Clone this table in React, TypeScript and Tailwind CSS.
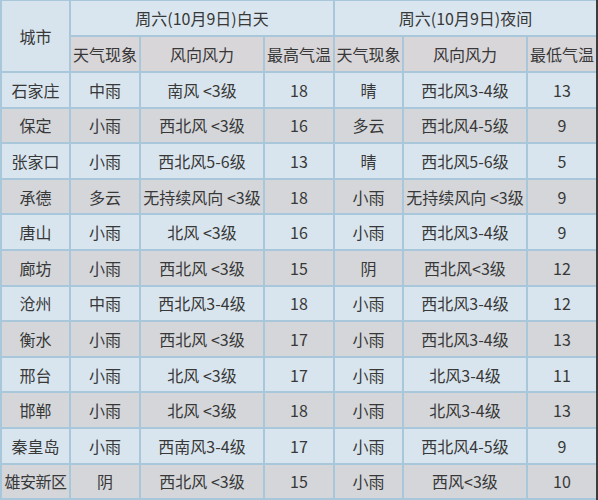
import React from "react";

const rows: [string, string, string, string, string, string, string][] = [
  ["石家庄", "中雨", "南风 <3级", "18", "晴", "西北风3-4级", "13"],
  ["保定", "小雨", "西北风 <3级", "16", "多云", "西北风4-5级", "9"],
  ["张家口", "小雨", "西北风5-6级", "13", "晴", "西北风5-6级", "5"],
  ["承德", "多云", "无持续风向 <3级", "18", "小雨", "无持续风向 <3级", "9"],
  ["唐山", "小雨", "北风 <3级", "16", "小雨", "西北风3-4级", "9"],
  ["廊坊", "小雨", "西北风 <3级", "15", "阴", "西北风<3级", "12"],
  ["沧州", "中雨", "西北风3-4级", "18", "小雨", "西北风3-4级", "12"],
  ["衡水", "小雨", "西北风 <3级", "17", "小雨", "西北风3-4级", "13"],
  ["邢台", "小雨", "北风 <3级", "17", "小雨", "北风3-4级", "11"],
  ["邯郸", "小雨", "北风 <3级", "18", "小雨", "北风3-4级", "13"],
  ["秦皇岛", "小雨", "西南风3-4级", "17", "小雨", "西北风4-5级", "9"],
  ["雄安新区", "阴", "西北风 <3级", "15", "小雨", "西风<3级", "10"],
];

const cell = "flex items-center justify-center whitespace-nowrap";

export default function App() {
  return (
    <div
      className="w-[598px] h-[500px] bg-[#a9c7da] text-[#383838] text-[16px] overflow-hidden"
      style={{ fontFamily: '"Noto Sans CJK SC", "Noto Sans", sans-serif' }}
    >
      <div className="grid grid-cols-[67px_68px_122px_68px_67px_122px_68px] grid-rows-[34px_34px_repeat(12,33.6px)] gap-[2px] pl-[2px] pt-[1px] pr-[2px] border-r-2 border-[#3c3c3c] w-[598px] h-[500px]">
        <div className={`${cell} row-span-2 bg-[#d7e4ee]`}>城市</div>
        <div className={`${cell} col-span-3 bg-[#dae6ef]`}>周六(10月9日)白天</div>
        <div className={`${cell} col-span-3 bg-[#dae6ef]`}>周六(10月9日)夜间</div>
        {["天气现象", "风向风力", "最高气温", "天气现象", "风向风力", "最低气温"].map((h, i) => (
          <div key={i} className={`${cell} bg-[#d8d6d9]`}>
            {h}
          </div>
        ))}
        {rows.map((r, ri) =>
          r.map((v, ci) => (
            <div
              key={`${ri}-${ci}`}
              className={`${cell} ${ri % 2 === 0 ? "bg-[#d9e5ee]" : "bg-[#d4d6da]"} ${
                ci === 0 && v.length > 3 ? "tracking-[-0.5px]" : ""
              }`}
            >
              {v}
            </div>
          ))
        )}
      </div>
    </div>
  );
}
